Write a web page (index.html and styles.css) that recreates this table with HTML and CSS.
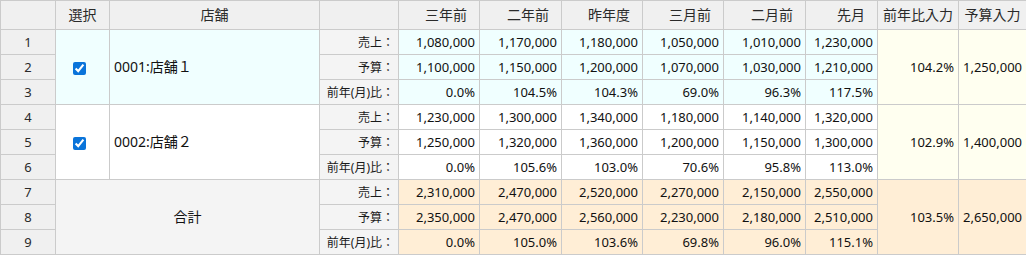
FILE: index.html
```html
<!DOCTYPE html>
<html lang="ja">
<head>
<meta charset="utf-8">
<link rel="stylesheet" href="styles.css">
</head>
<body>
<table class="grid">
  <colgroup>
    <col class="c-no"><col class="c-sel"><col class="c-store"><col class="c-label">
    <col class="c-num"><col class="c-num2"><col class="c-num"><col class="c-num">
    <col class="c-num2"><col class="c-last"><col class="c-num"><col class="c-budget">
  </colgroup>
  <thead>
    <tr class="head">
      <th class="rowno"></th>
      <th class="center">選択</th>
      <th class="center">店舗</th>
      <th></th>
      <th class="right">三年前</th>
      <th class="right">二年前</th>
      <th class="right">昨年度</th>
      <th class="right">三月前</th>
      <th class="right">二月前</th>
      <th class="right">先月</th>
      <th class="input-head">前年比入力</th>
      <th class="input-head">予算入力</th>
    </tr>
  </thead>
  <tbody>
    <tr class="store1">
      <td class="rowno">1</td>
      <td class="sel" rowspan="3"><input type="checkbox" checked></td>
      <td class="name" rowspan="3">0001:店舗１</td>
      <td class="label">売上：</td>
      <td class="num">1,080,000</td><td class="num">1,170,000</td><td class="num">1,180,000</td>
      <td class="num">1,050,000</td><td class="num">1,010,000</td><td class="num">1,230,000</td>
      <td class="num entry" rowspan="3">104.2%</td>
      <td class="num entry" rowspan="3">1,250,000</td>
    </tr>
    <tr class="store1">
      <td class="rowno">2</td>
      <td class="label">予算：</td>
      <td class="num">1,100,000</td><td class="num">1,150,000</td><td class="num">1,200,000</td>
      <td class="num">1,070,000</td><td class="num">1,030,000</td><td class="num">1,210,000</td>
    </tr>
    <tr class="store1">
      <td class="rowno">3</td>
      <td class="label">前年(月)比：</td>
      <td class="num">0.0%</td><td class="num">104.5%</td><td class="num">104.3%</td>
      <td class="num">69.0%</td><td class="num">96.3%</td><td class="num">117.5%</td>
    </tr>
    <tr class="store2">
      <td class="rowno">4</td>
      <td class="sel" rowspan="3"><input type="checkbox" checked></td>
      <td class="name" rowspan="3">0002:店舗２</td>
      <td class="label">売上：</td>
      <td class="num">1,230,000</td><td class="num">1,300,000</td><td class="num">1,340,000</td>
      <td class="num">1,180,000</td><td class="num">1,140,000</td><td class="num">1,320,000</td>
      <td class="num entry" rowspan="3">102.9%</td>
      <td class="num entry" rowspan="3">1,400,000</td>
    </tr>
    <tr class="store2">
      <td class="rowno">5</td>
      <td class="label">予算：</td>
      <td class="num">1,250,000</td><td class="num">1,320,000</td><td class="num">1,360,000</td>
      <td class="num">1,200,000</td><td class="num">1,150,000</td><td class="num">1,300,000</td>
    </tr>
    <tr class="store2">
      <td class="rowno">6</td>
      <td class="label">前年(月)比：</td>
      <td class="num">0.0%</td><td class="num">105.6%</td><td class="num">103.0%</td>
      <td class="num">70.6%</td><td class="num">95.8%</td><td class="num">113.0%</td>
    </tr>
    <tr class="total">
      <td class="rowno">7</td>
      <td class="total-name" colspan="2" rowspan="3">合計</td>
      <td class="label">売上：</td>
      <td class="num">2,310,000</td><td class="num">2,470,000</td><td class="num">2,520,000</td>
      <td class="num">2,270,000</td><td class="num">2,150,000</td><td class="num">2,550,000</td>
      <td class="num" rowspan="3">103.5%</td>
      <td class="num" rowspan="3">2,650,000</td>
    </tr>
    <tr class="total">
      <td class="rowno">8</td>
      <td class="label">予算：</td>
      <td class="num">2,350,000</td><td class="num">2,470,000</td><td class="num">2,560,000</td>
      <td class="num">2,230,000</td><td class="num">2,180,000</td><td class="num">2,510,000</td>
    </tr>
    <tr class="total">
      <td class="rowno">9</td>
      <td class="label">前年(月)比：</td>
      <td class="num">0.0%</td><td class="num">105.0%</td><td class="num">103.6%</td>
      <td class="num">69.8%</td><td class="num">96.0%</td><td class="num">115.1%</td>
    </tr>
  </tbody>
</table>
</body>
</html>
```

FILE: styles.css
```css
html, body {
  margin: 0;
  padding: 0;
  background: #ffffff;
}

.grid {
  border-collapse: collapse;
  table-layout: fixed;
  width: 1026px;
  font-family: "Noto Sans", "Noto Sans CJK JP", sans-serif;
  font-size: 13px;
  color: #111111;
}

.c-no { width: 55px; }
.c-sel { width: 54px; }
.c-store { width: 210px; }
.c-label { width: 79px; }
.c-num { width: 81px; }
.c-num2 { width: 82px; }
.c-last { width: 72px; }
.c-budget { width: 68px; }

.grid th,
.grid td {
  border: 1px solid #cbcbcb;
  padding: 0 4px;
  white-space: nowrap;
  overflow: hidden;
  line-height: 16px;
}

.head th {
  height: 28px;
  background: #f0f0f0;
  font-weight: normal;
  font-size: 14px;
  color: #2a2a2a;
}

.head .center { text-align: center; }
.head .right { text-align: right; padding-right: 12px; }
.head .input-head { text-align: center; padding: 0; }

.grid tbody td { height: 24px; }

.grid td.rowno {
  background: #f0f0f0;
  text-align: center;
  color: #2a2a2a;
}

.grid td.label {
  background: #f4f4f4;
  text-align: right;
  font-size: 12px;
  height: 22px;
  padding-top: 2px;
  padding-bottom: 0;
  color: #1a1a1a;
}

.num { text-align: right; }

.sel {
  text-align: center;
  vertical-align: middle;
}

.sel input {
  width: 13px;
  height: 13px;
  margin: 0 7px 0 0;
  vertical-align: middle;
  accent-color: #0a74da;
}

.name {
  font-size: 14px;
  vertical-align: middle;
}

.store1 .sel,
.store1 .name,
.store1 .num { background: #f0ffff; }

.store2 .sel,
.store2 .name,
.store2 .num { background: #ffffff; }

.store1 .entry,
.store2 .entry { background: #fffff0; }

.total .num { background: #ffeed6; }

.total-name {
  background: #f4f4f4;
  text-align: center;
  font-size: 14px;
}
```
